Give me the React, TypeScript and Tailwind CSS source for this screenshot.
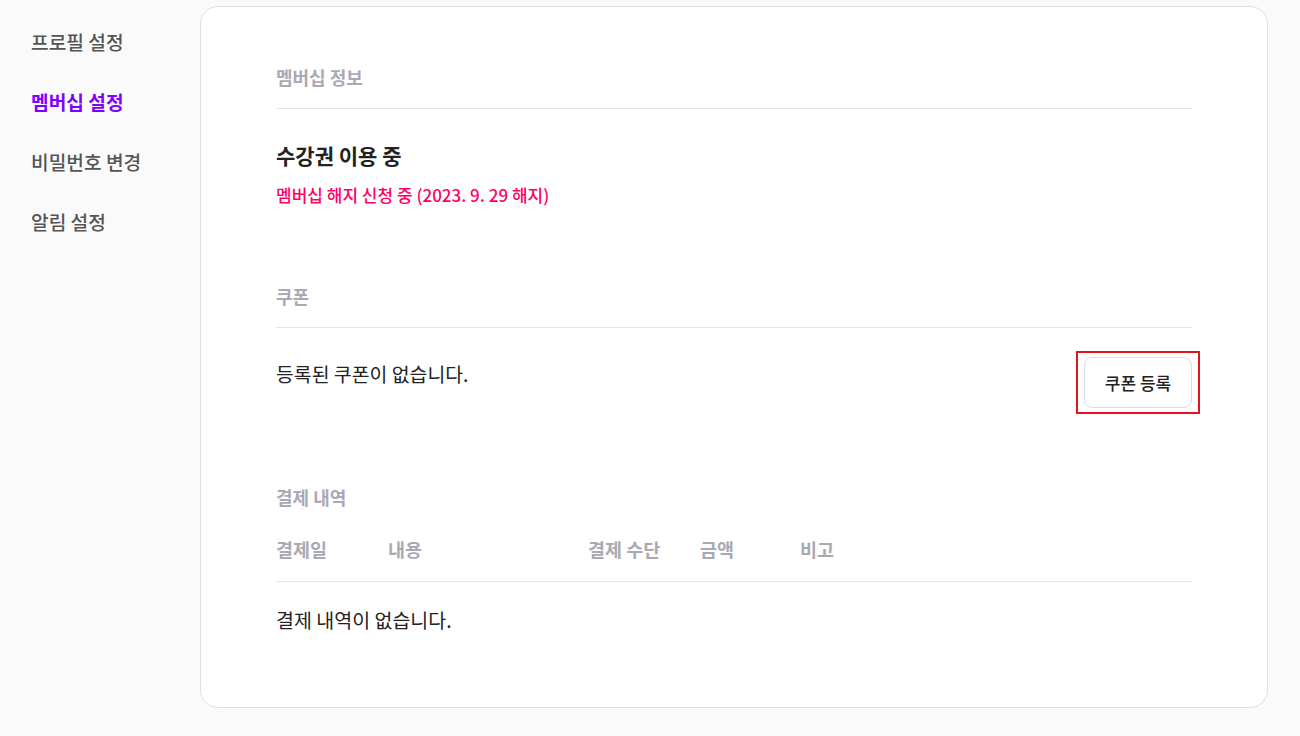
import React from "react";

const menu = [
  { label: "프로필 설정", active: false },
  { label: "멤버십 설정", active: true },
  { label: "비밀번호 변경", active: false },
  { label: "알림 설정", active: false },
];

const columns = ["결제일", "내용", "결제 수단", "금액", "비고"];

const SectionTitle = ({ children }: { children: React.ReactNode }) => (
  <div className="border-b border-[#e4e4e7] pb-[19px] text-[18px] leading-[24px] font-bold text-[#a9a9b4]">
    {children}
  </div>
);

const App = () => {
  return (
    <div
      className="flex min-h-screen bg-[#fafafa] text-[#222]"
      style={{ fontFamily: '"Noto Sans CJK KR", "Noto Sans", sans-serif' }}
    >
      <nav className="w-[200px] shrink-0 pl-[31px] pt-[12px]">
        {menu.map((item) => (
          <div
            key={item.label}
            className={
              item.active
                ? "flex h-[60px] items-center text-[19.2px] font-bold text-[#8000ff]"
                : "flex h-[60px] items-center text-[19.2px] font-medium text-[#555]"
            }
          >
            {item.label}
          </div>
        ))}
      </nav>

      <main className="mt-[6px] mb-[28px] h-[702px] w-[1068px] rounded-[18px] border border-[#dedeeb] bg-white pl-[75px] pr-[75px] pt-[58px]">
        <section>
          <SectionTitle>멤버십 정보</SectionTitle>
          <div className="mt-[32px] text-[21px] leading-[28px] font-bold text-[#222]">
            수강권 이용 중
          </div>
          <div className="mt-[14px] text-[17px] leading-[24px] font-medium text-[#ff0066]">
            멤버십 해지 신청 중 (2023. 9. 29 해지)
          </div>
        </section>

        <section className="mt-[77px]">
          <SectionTitle>쿠폰</SectionTitle>
          <div className="mt-[23px] flex items-start justify-between">
            <p className="mt-[10px] text-[19.4px] leading-[26px] text-[#222]">
              등록된 쿠폰이 없습니다.
            </p>
            <div className="-mr-[8px] border-2 border-[#e5131d] px-[6px] py-[4px]">
              <button className="block h-[51px] w-[108px] rounded-[8px] border border-[#dcdce0] bg-white text-[17px] font-medium text-[#222]">
                쿠폰 등록
              </button>
            </div>
          </div>
        </section>

        <section className="mt-[71px]">
          <div className="text-[18px] leading-[24px] font-bold text-[#a9a9b4]">결제 내역</div>
          <div className="mt-[28px] grid grid-cols-[112px_200px_112px_100px_1fr] border-b border-[#e4e4e7] pb-[20px] text-[18.5px] leading-[24px] font-bold text-[#a9a9b4]">
            {columns.map((c) => (
              <div key={c}>{c}</div>
            ))}
          </div>
          <p className="mt-[25px] text-[19.5px] leading-[26px] text-[#222]">결제 내역이 없습니다.</p>
        </section>
      </main>
    </div>
  );
};

export default App;
